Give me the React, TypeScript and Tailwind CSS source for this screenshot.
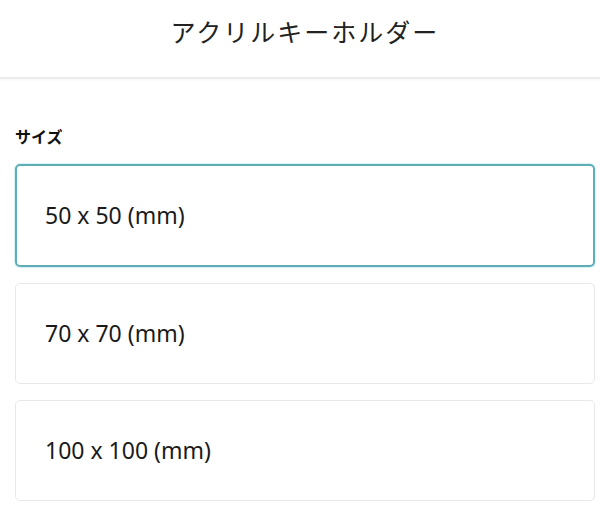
import React from "react";

const sizes = ["50 x 50 (mm)", "70 x 70 (mm)", "100 x 100 (mm)"];

export default function App() {
  return (
    <div className="w-[600px] h-[510px] bg-white overflow-hidden font-['Noto_Sans','Noto_Sans_CJK_JP',sans-serif] text-[#222]">
      <header className="h-[79px] flex items-center justify-center border-b-2 border-[#ececec] shadow-[0_1px_2px_rgba(0,0,0,0.04)]">
        <h1 className="text-[25px] font-normal tracking-[2px] mb-[12px] ml-[10px] text-[#222]">アクリルキーホルダー</h1>
      </header>
      <main className="pl-[15px] pr-[5px] pt-[45px]">
        <div className="text-[16px] font-bold leading-[26px] text-[#111]">サイズ</div>
        <div className="mt-[14px] flex flex-col gap-[16px]">
          {sizes.map((s, i) => (
            <div
              key={s}
              className={
                i === 0
                  ? "h-[103px] rounded-[5px] border-2 border-[#5fadb6] shadow-[0_0_0_1px_#d6f3f5] flex items-center pl-[28px]"
                  : "h-[101px] rounded-[5px] border border-[#e8e8e8] flex items-center pl-[29px]"
              }
            >
              <span className="text-[23px] leading-none text-[#1a1a1a]">{s}</span>
            </div>
          ))}
        </div>
      </main>
    </div>
  );
}
